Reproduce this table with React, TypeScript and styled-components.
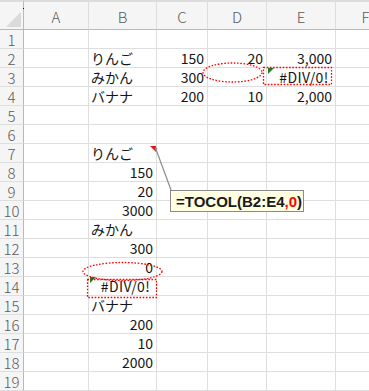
import React from 'react'
import styled, { createGlobalStyle, css } from 'styled-components'

const GlobalStyle = createGlobalStyle`
  html, body {
    margin: 0;
    padding: 0;
    background: #ffffff;
    overflow: hidden;
  }
`

type Cell = { v: string; kind?: 'text' | 'num' | 'err'; errMark?: boolean }

const COLS = ['A', 'B', 'C', 'D', 'E', 'F']

const data: Record<number, Record<string, Cell>> = {
  2: { B: { v: 'りんご' }, C: { v: '150', kind: 'num' }, D: { v: '20', kind: 'num' }, E: { v: '3,000', kind: 'num' } },
  3: { B: { v: 'みかん' }, C: { v: '300', kind: 'num' }, E: { v: '#DIV/0!', kind: 'err', errMark: true } },
  4: { B: { v: 'バナナ' }, C: { v: '200', kind: 'num' }, D: { v: '10', kind: 'num' }, E: { v: '2,000', kind: 'num' } },
  7: { B: { v: 'りんご' } },
  8: { B: { v: '150', kind: 'num' } },
  9: { B: { v: '20', kind: 'num' } },
  10: { B: { v: '3000', kind: 'num' } },
  11: { B: { v: 'みかん' } },
  12: { B: { v: '300', kind: 'num' } },
  13: { B: { v: '0', kind: 'num' } },
  14: { B: { v: '#DIV/0!', kind: 'err', errMark: true } },
  15: { B: { v: 'バナナ' } },
  16: { B: { v: '200', kind: 'num' } },
  17: { B: { v: '10', kind: 'num' } },
  18: { B: { v: '2000', kind: 'num' } },
}

const ROWS = Array.from({ length: 19 }, (_, i) => i + 1)

const App = () => {
  return (
    <>
      <GlobalStyle />
      <Sheet>
        <Grid>
          <Corner>
            <CornerTriangle />
            <Dot />
          </Corner>
          {COLS.map((c) => (
            <ColHeader key={c}>{c}</ColHeader>
          ))}
          {ROWS.map((r) => (
            <React.Fragment key={r}>
              <RowHeader>{r}</RowHeader>
              {COLS.map((c) => {
                const cell = data[r]?.[c]
                return (
                  <DataCell key={c} $kind={cell?.kind ?? 'text'} $errMark={!!cell?.errMark}>
                    {cell?.v}
                  </DataCell>
                )
              })}
            </React.Fragment>
          ))}
        </Grid>

        <Annotations width="369" height="391" viewBox="0 0 369 391">
          <g fill="none" stroke="#ff0000" strokeWidth="1.3" strokeDasharray="1.6 1.6">
            <ellipse cx="232.5" cy="72.5" rx="29.5" ry="9.5" />
            <rect x="263.5" y="67.5" width="68" height="17" />
            <ellipse cx="122.5" cy="271.5" rx="39.5" ry="9" />
            <rect x="87.5" y="279.5" width="69" height="18" />
          </g>
          <polygon points="150,146 156,146 156,152" fill="#e8141a" />
          <line x1="155.5" y1="148" x2="171" y2="190" stroke="#8c8c8c" strokeWidth="1.2" />
          <circle cx="156" cy="149" r="1.3" fill="#8c8c8c" />
        </Annotations>

        <CommentBox>
          =TOCOL(B2:E4<Red>,0</Red>)
        </CommentBox>
      </Sheet>
    </>
  )
}

const Sheet = styled.div`
  position: relative;
  width: 369px;
  height: 391px;
  overflow: hidden;
  background: #ffffff;
`

const Grid = styled.div`
  display: grid;
  grid-template-columns: 24px 65px 68px 51px 59px 69px 60px;
  grid-template-rows: 30px repeat(19, 19px);
`

const headerBase = css`
  background: #f5f5f5;
  color: #5a5a5a;
  font-family: 'Noto Sans CJK JP', 'Noto Sans', sans-serif;
  font-weight: 300;
  font-size: 15px;
  display: flex;
  align-items: center;
  justify-content: center;
  box-sizing: border-box;
`

const Corner = styled.div`
  ${headerBase};
  position: relative;
  border-top: 2px solid #dcdcdc;
  border-right: 1px solid #b9b9b9;
  border-bottom: 1px solid #b9b9b9;
`

const CornerTriangle = styled.div`
  position: absolute;
  right: 2px;
  bottom: 2px;
  width: 0;
  height: 0;
  border-left: 15px solid transparent;
  border-bottom: 15px solid #dadada;
`

const Dot = styled.div`
  position: absolute;
  right: -1px;
  top: 6px;
  width: 1px;
  height: 1px;
  background: #111;
`

const ColHeader = styled.div`
  ${headerBase};
  padding-top: 2px;
  border-top: 2px solid #dcdcdc;
  border-right: 1px solid #dedede;
  border-bottom: 1px solid #b9b9b9;
`

const RowHeader = styled.div`
  ${headerBase};
  border-right: 1px solid #b9b9b9;
  border-bottom: 1px solid #dedede;
`

const DataCell = styled.div<{ $kind: 'text' | 'num' | 'err'; $errMark: boolean }>`
  position: relative;
  box-sizing: border-box;
  border-right: 1px solid #dedede;
  border-bottom: 1px solid #dedede;
  font-family: 'Noto Sans CJK JP', 'Noto Sans', sans-serif;
  font-size: 14px;
  line-height: 18px;
  color: #151515;
  white-space: nowrap;
  overflow: visible;
  display: flex;
  align-items: center;
  padding: ${(p) => (p.$kind === 'err' ? '0 2px 0 8px' : '0 3px 0 2px')};
  justify-content: ${(p) => (p.$kind === 'num' ? 'flex-end' : p.$kind === 'err' ? 'center' : 'flex-start')};
  letter-spacing: ${(p) => (p.$kind === 'err' ? '0.4px' : '0')};

  ${(p) =>
    p.$errMark &&
    css`
      &::before {
        content: '';
        position: absolute;
        left: 1px;
        top: 0;
        width: 0;
        height: 0;
        border-top: 6px solid #1e7b22;
        border-right: 6px solid transparent;
      }
    `}
`

const Annotations = styled.svg`
  position: absolute;
  left: 0;
  top: 0;
  pointer-events: none;
`

const CommentBox = styled.div`
  position: absolute;
  left: 170px;
  top: 190px;
  width: 134px;
  height: 22px;
  box-sizing: border-box;
  border: 1px solid #8a8a8a;
  background: #ffffe1;
  font-family: 'Liberation Sans', Arial, sans-serif;
  font-weight: bold;
  font-size: 15px;
  color: #1a1a1a;
  display: flex;
  align-items: center;
  padding-left: 5px;
  white-space: nowrap;
`

const Red = styled.span`
  color: #ff0000;
`

export default App
